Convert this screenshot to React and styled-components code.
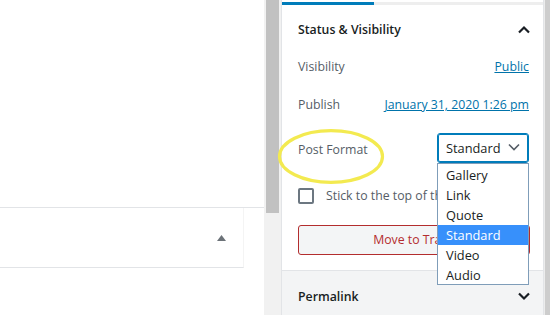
import React from "react";
import styled, { createGlobalStyle } from "styled-components";

const Global = createGlobalStyle`
  html, body {
    margin: 0;
    padding: 0;
    width: 550px;
    height: 315px;
    overflow: hidden;
    background: #fff;
  }
  body {
    font-family: "Open Sans", "Noto Sans", sans-serif;
    font-size: 12.3px;
    color: #555d66;
  }
  * { box-sizing: border-box; }
`;

const Page = styled.div`
  display: flex;
  width: 550px;
  height: 315px;
`;

const EditorPane = styled.div`
  width: 264px;
  display: flex;
  flex-direction: column;
  background: #fff;
`;

const EditorBlank = styled.div`
  height: 208px;
  border-bottom: 1px solid #e2e4e7;
`;

const MetaBoxRow = styled.div`
  width: 244px;
  height: 60px;
  display: flex;
  align-items: center;
  justify-content: flex-end;
  padding-right: 17px;
  border-bottom: 1px solid #e2e4e7;
  border-right: 1px solid #f4f4f4;
`;

const Scrollbar = styled.div`
  width: 17px;
  background: #f1f1f1;
  display: flex;
  justify-content: center;
`;

const Thumb = styled.div`
  width: 13px;
  height: 213px;
  background: #c1c1c1;
`;

const Sidebar = styled.div`
  width: 263px;
  display: flex;
  flex-direction: column;
  background: #fff;
  border-left: 1px solid #e2e4e7;
  border-right: 1px solid #e2e4e7;
`;

const TabStrip = styled.div`
  height: 5px;
  padding-top: 1.5px;
`;

const TabRow = styled.div`
  display: flex;
  height: 3px;
  background: #eeeeee;
`;

const ActiveTab = styled.div`
  width: 92px;
  background: #007cba;
`;

const Panel = styled.div`
  display: flex;
  flex-direction: column;
  padding: 0 14px 15px 16px;
  border-bottom: 1px solid #e2e4e7;
`;

const PanelHeader = styled.div`
  height: ${(p) => p.$h || 48}px;
  padding-top: ${(p) => p.$pt || 0}px;
  display: flex;
  align-items: center;
  justify-content: space-between;
  color: #191e23;
  font-weight: 600;
  font-size: 12.3px;
`;

const Chevron = styled.svg`
  margin-right: -2px;
  display: block;
`;

const Row = styled.div`
  position: relative;
  display: flex;
  align-items: center;
  justify-content: space-between;
  height: ${(p) => p.$h}px;
  margin-top: ${(p) => p.$mt || 0}px;
  padding-top: ${(p) => p.$pt || 0}px;
`;

const Label = styled.span`
  position: relative;
  top: ${(p) => p.$dy || 0}px;
  color: #555d66;
`;

const Link = styled.a`
  color: #0073aa;
  text-decoration: underline;
  text-underline-offset: 1px;
`;

const Highlight = styled.svg`
  position: absolute;
  left: -21px;
  top: -13px;
  pointer-events: none;
`;

const SelectWrap = styled.div`
  position: relative;
  width: 92px;
  height: 30px;
`;

const SelectBox = styled.div`
  height: 30px;
  display: flex;
  align-items: center;
  justify-content: space-between;
  padding: 0 9px 0 8px;
  border: 1px solid #007cba;
  box-shadow: inset 0 0 0 1px #007cba;
  border-radius: 3px;
  color: #191e23;
  font-size: 12.8px;
  background: #fff;
`;

const OptionList = styled.ul`
  position: absolute;
  left: 0;
  top: 30px;
  width: 92px;
  margin: 0;
  padding: 1px 0 0;
  list-style: none;
  height: 122px;
  border: 1px solid #7f9db9;
  background: #fff;
  z-index: 5;
`;

const Option = styled.li`
  height: 20px;
  line-height: 21px;
  padding-left: 8px;
  font-size: 12.8px;
  color: ${(p) => (p.$active ? "#fff" : "#191e23")};
  background: ${(p) => (p.$active ? "#3790fb" : "transparent")};
`;

const CheckRow = styled.div`
  display: flex;
  align-items: center;
  gap: 12px;
  height: 16px;
  margin-top: 25px;
  white-space: nowrap;
`;

const Checkbox = styled.span`
  width: 16px;
  height: 16px;
  border: 2px solid #6c7781;
  border-radius: 2px;
  flex: none;
`;

const TrashButton = styled.button`
  margin-top: 21px;
  height: 30px;
  width: 232px;
  border: 1px solid #b32d2e;
  border-radius: 3px;
  background: #f3f5f6;
  color: #b32d2e;
  font-family: inherit;
  font-size: 12.3px;
  padding: 0;
`;

const CollapsedPanel = styled.div`
  flex: 1;
  background: #f3f4f5;
  padding: 0 14px 0 16px;
`;

const OuterScroll = styled.div`
  width: 6px;
  background: #cdcdcd;
  border-left: 1px solid #ececec;
`;

const ChevronUp = () => (
  <Chevron width="14" height="9" viewBox="0 0 14 9">
    <polyline points="2,7.5 7,2.5 12,7.5" fill="none" stroke="#191e23" strokeWidth="2.2" />
  </Chevron>
);

const ChevronDown = ({ color = "#191e23", w = 2.2 }) => (
  <Chevron width="14" height="9" viewBox="0 0 14 9">
    <polyline points="2,1.5 7,6.5 12,1.5" fill="none" stroke={color} strokeWidth={w} />
  </Chevron>
);

const formats = ["Gallery", "Link", "Quote", "Standard", "Video", "Audio"];

export default function App() {
  return (
    <>
      <Global />
      <Page>
        <EditorPane>
          <EditorBlank />
          <MetaBoxRow>
            <svg width="9" height="6" viewBox="0 0 9 6">
              <polygon points="4.5,0 9,6 0,6" fill="#6c7278" />
            </svg>
          </MetaBoxRow>
        </EditorPane>
        <Scrollbar>
          <Thumb />
        </Scrollbar>
        <Sidebar>
          <TabStrip>
            <TabRow>
              <ActiveTab />
            </TabRow>
          </TabStrip>
          <Panel>
            <PanelHeader $pt={2}>
              <span>Status &amp; Visibility</span>
              <ChevronUp />
            </PanelHeader>
            <Row $h={26} $pt={2}>
              <Label>Visibility</Label>
              <Link>Public</Link>
            </Row>
            <Row $h={26} $mt={12} $pt={2}>
              <Label>Publish</Label>
              <Link>January 31, 2020 1:26 pm</Link>
            </Row>
            <Row $h={30} $mt={16}>
              <Label $dy={2}>
                Post Format
                <Highlight width="108" height="57" viewBox="0 0 108 57">
                  <ellipse cx="54" cy="28.5" rx="51.5" ry="25.8" fill="none" stroke="#f3ea50" strokeWidth="3.2" />
                </Highlight>
              </Label>
              <SelectWrap>
                <SelectBox>
                  <span>Standard</span>
                  <ChevronDown color="#555d66" w={1.6} />
                </SelectBox>
                <OptionList>
                  {formats.map((f) => (
                    <Option key={f} $active={f === "Standard"}>
                      {f}
                    </Option>
                  ))}
                </OptionList>
              </SelectWrap>
            </Row>
            <CheckRow>
              <Checkbox />
              <span>Stick to the top of the blog</span>
            </CheckRow>
            <TrashButton>Move to Trash</TrashButton>
          </Panel>
          <CollapsedPanel>
            <PanelHeader $h={47} $pt={4}>
              <span>Permalink</span>
              <ChevronDown />
            </PanelHeader>
          </CollapsedPanel>
        </Sidebar>
        <OuterScroll />
      </Page>
    </>
  );
}
